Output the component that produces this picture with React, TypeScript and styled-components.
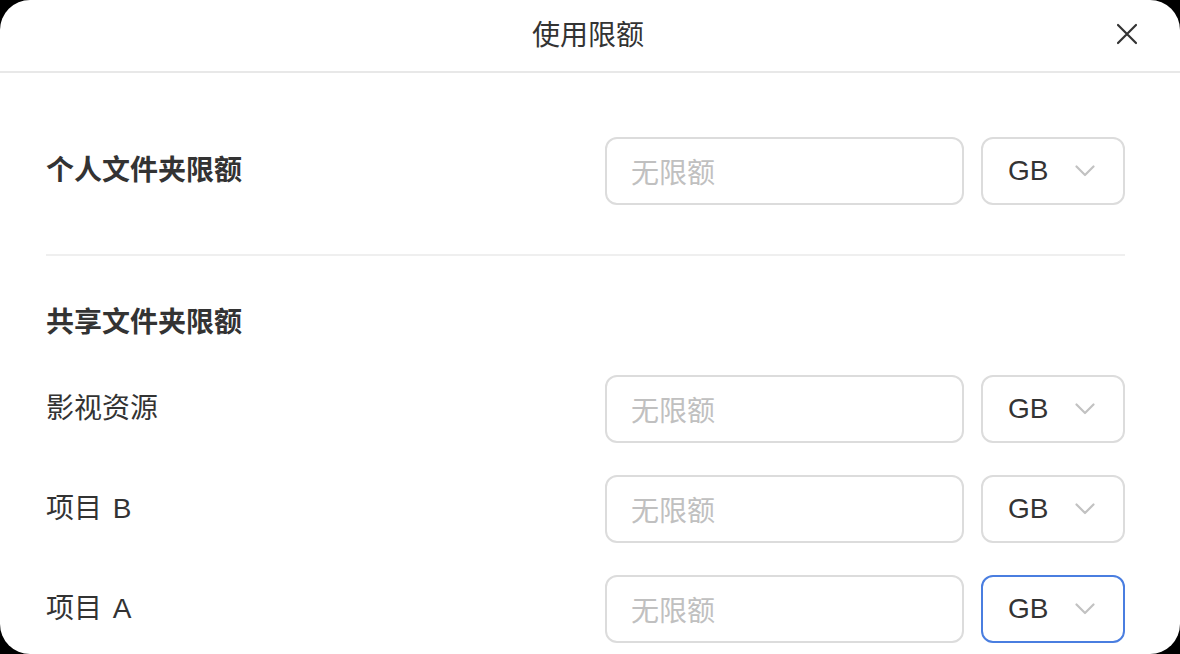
import React from "react";
import styled, { createGlobalStyle } from "styled-components";

const GlobalStyle = createGlobalStyle`
  html, body {
    margin: 0;
    padding: 0;
    background: #000;
  }
  body {
    font-family: "Liberation Sans", "Noto Sans CJK SC", sans-serif;
    -webkit-font-smoothing: antialiased;
  }
  * { box-sizing: border-box; }
`;

const Dialog = styled.div`
  width: 1180px;
  height: 654px;
  background: #fff;
  border-radius: 30px;
  overflow: hidden;
  display: flex;
  flex-direction: column;
`;

const Header = styled.header`
  position: relative;
  height: 73px;
  flex: none;
  border-bottom: 2px solid #e8e8e8;
  display: flex;
  align-items: center;
  justify-content: center;
  padding: 0 4px 6px 0;
`;

const Title = styled.h1`
  margin: 0;
  font-size: 28px;
  font-weight: 400;
  color: #333;
  line-height: 40px;
  font-family: "Noto Sans CJK SC", sans-serif;
`;

const CloseButton = styled.button`
  position: absolute;
  right: 38px;
  top: 19px;
  width: 30px;
  height: 30px;
  padding: 0;
  border: none;
  background: transparent;
  display: flex;
  align-items: center;
  justify-content: center;
  cursor: pointer;
`;

const Body = styled.div`
  padding: 64px 55px 0 46px;
  display: flex;
  flex-direction: column;
`;

const Row = styled.div`
  display: flex;
  align-items: center;
  height: 68px;
  & + & {
    margin-top: 32px;
  }
`;

const Label = styled.div<{ $bold?: boolean }>`
  flex: 1;
  font-size: 28px;
  color: #333;
  font-weight: ${(p) => (p.$bold ? 700 : 400)};
  line-height: 40px;
  word-spacing: 3px;
`;

const Divider = styled.hr`
  margin: 49px 0 0;
  border: none;
  height: 2px;
  background: #efefef;
`;

const SectionTitle = styled.h2`
  margin: 47px 0 32px;
  font-size: 28px;
  font-weight: 700;
  color: #333;
  line-height: 40px;
`;

const Input = styled.input`
  width: 359px;
  height: 68px;
  border: 2px solid #dcdcdc;
  border-radius: 12px;
  padding: 0 24px;
  font-size: 28px;
  font-family: "Noto Sans CJK SC", sans-serif;
  color: #333;
  outline: none;
  &::placeholder {
    color: #c0c0c0;
  }
`;

const Select = styled.div<{ $focused?: boolean }>`
  margin-left: 17px;
  width: 144px;
  height: 68px;
  border: 2px solid ${(p) => (p.$focused ? "#4a7ee0" : "#dcdcdc")};
  border-radius: 12px;
  padding: 0 28px 0 25px;
  display: flex;
  align-items: center;
  justify-content: space-between;
  font-size: 28px;
  color: #333;
`;

const Chevron = () => (
  <svg width="20" height="12" viewBox="0 0 20 12" fill="none">
    <path d="M1.5 1.5 L10 10 L18.5 1.5" stroke="#c2c2c2" strokeWidth="2.2" strokeLinecap="round" strokeLinejoin="round" />
  </svg>
);

const CloseIcon = () => (
  <svg width="22" height="22" viewBox="0 0 22 22" fill="none">
    <path d="M2 2 L20 20 M20 2 L2 20" stroke="#333" strokeWidth="2.2" strokeLinecap="round" />
  </svg>
);

const QuotaRow = ({ label, bold, focused }: { label: string; bold?: boolean; focused?: boolean }) => (
  <Row>
    <Label $bold={bold}>{label}</Label>
    <Input placeholder="无限额" />
    <Select $focused={focused}>
      <span>GB</span>
      <Chevron />
    </Select>
  </Row>
);

export default function App() {
  return (
    <>
      <GlobalStyle />
      <Dialog>
        <Header>
          <Title>使用限额</Title>
          <CloseButton aria-label="关闭">
            <CloseIcon />
          </CloseButton>
        </Header>
        <Body>
          <QuotaRow label="个人文件夹限额" bold />
          <Divider />
          <SectionTitle>共享文件夹限额</SectionTitle>
          <div>
            <QuotaRow label="影视资源" />
            <QuotaRow label="项目 B" />
            <QuotaRow label="项目 A" focused />
          </div>
        </Body>
      </Dialog>
    </>
  );
}
